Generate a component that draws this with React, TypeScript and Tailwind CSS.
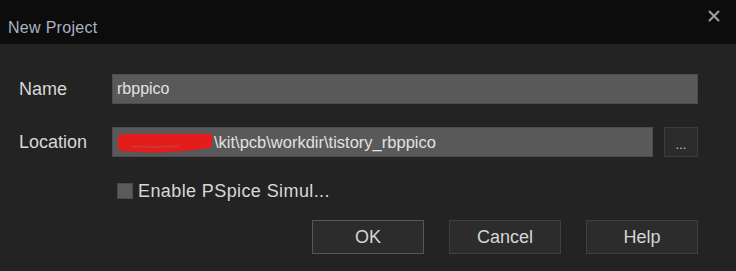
import React from "react";

const font = { fontFamily: '"Liberation Sans", Arial, sans-serif' };

function Btn({ label, focused }: { label: string; focused?: boolean }) {
  return (
    <button
      className={
        "w-[112px] h-[34px] bg-[#2c2c2c] text-[18px] text-[#d6d6d6] flex items-center justify-center border " +
        (focused ? "border-[#575757]" : "border-[#404040]")
      }
    >
      {label}
    </button>
  );
}

export default function App() {
  return (
    <div className="w-[736px] h-[271px] bg-[#232323] flex flex-col overflow-hidden" style={font}>
      <div className="h-[44px] bg-[#0c0c0c] flex items-start justify-between">
        <div className="pl-[8px] pt-[18px] text-[16px] leading-[20px] text-[#aab4c4] tracking-[0.3px]">New Project</div>
        <div className="pr-[16px] pt-[10px]">
          <svg width="12" height="12" viewBox="0 0 12 12">
            <path d="M1.5 1.5 L10.5 10.5 M10.5 1.5 L1.5 10.5" stroke="#a0a0a0" strokeWidth="2" strokeLinecap="round" />
          </svg>
        </div>
      </div>
      <div className="flex flex-col pl-[19px] pr-[38px] pt-[30px]">
        <div className="flex items-center h-[30px]">
          <div className="w-[93px] text-[18px] text-[#d8d8d8]">Name</div>
          <div className="flex-1 h-[30px] bg-[#595959] border border-[#4c4c4c] flex items-center pl-[4px] text-[16px] text-[#e2e2e2]">
            rbppico
          </div>
        </div>
        <div className="flex items-center h-[30px] mt-[23px]">
          <div className="w-[93px] text-[18px] text-[#d8d8d8]">Location</div>
          <div className="flex-1 h-[30px] bg-[#595959] border border-[#4c4c4c] flex items-center pl-[4px] text-[16.5px] text-[#e2e2e2] whitespace-nowrap overflow-hidden">
            <svg width="97" height="20" viewBox="0 0 97 20" className="shrink-0 mt-[3px]">
              <path d="M5 5 Q40 1 91 4" stroke="#e41c1c" strokeWidth="9" strokeLinecap="round" fill="none" />
              <path d="M5 13 Q45 17 91 10" stroke="#e41c1c" strokeWidth="8" strokeLinecap="round" fill="none" />
              <path d="M5 9 L91 8" stroke="#e41c1c" strokeWidth="8" strokeLinecap="round" />
              <path d="M14 12.5 Q40 14 62 12" stroke="#9a7070" strokeWidth="1" fill="none" opacity="0.6" />
            </svg>
            <span>\kit\pcb\workdir\tistory_rbppico</span>
          </div>
          <div className="ml-[11px] w-[34px] h-[30px] bg-[#2b2b2b] border border-[#3c3c3c] flex items-end justify-center pb-[5px] text-[13px] leading-[13px] text-[#d0d0d0]">
            ...
          </div>
        </div>
        <div className="flex items-center mt-[26px] pl-[98px] h-[16px]">
          <div className="w-[16px] h-[16px] bg-[#5a5a5a] border border-[#4a4a4a]" />
          <span className="ml-[5px] text-[18px] text-[#d8d8d8] tracking-[0.4px]">Enable PSpice Simul...</span>
        </div>
        <div className="flex justify-end gap-[25px] mt-[21px]">
          <Btn label="OK" focused />
          <Btn label="Cancel" />
          <Btn label="Help" />
        </div>
      </div>
    </div>
  );
}
